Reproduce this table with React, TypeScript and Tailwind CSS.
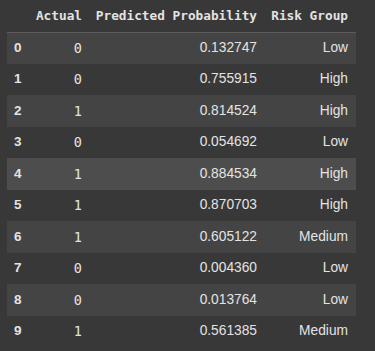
import React from 'react';

interface Row {
  actual: number;
  prob: string;
  risk: string;
}

const rows: Row[] = [
  { actual: 0, prob: '0.132747', risk: 'Low' },
  { actual: 0, prob: '0.755915', risk: 'High' },
  { actual: 1, prob: '0.814524', risk: 'High' },
  { actual: 0, prob: '0.054692', risk: 'Low' },
  { actual: 1, prob: '0.884534', risk: 'High' },
  { actual: 1, prob: '0.870703', risk: 'High' },
  { actual: 1, prob: '0.605122', risk: 'Medium' },
  { actual: 0, prob: '0.004360', risk: 'Low' },
  { actual: 0, prob: '0.013764', risk: 'Low' },
  { actual: 1, prob: '0.561385', risk: 'Medium' },
];

const mono = "font-['DejaVu_Sans_Mono',monospace]";
const sans = "font-['Liberation_Sans',Arial,sans-serif]";

const App: React.FC = () => (
  <div className="h-[351px] w-[375px] overflow-hidden bg-[#383838] pl-[7px]">
    <table className="w-[349px] table-fixed border-collapse text-[#e3e3e3]">
      <colgroup>
        <col className="w-[22px]" />
        <col className="w-[60px]" />
        <col className="w-[175px]" />
        <col className="w-[92px]" />
      </colgroup>
      <thead>
        <tr className={`h-[32px] border-b border-[#5c5c5c] text-[12.75px] font-bold ${mono}`}>
          <th />
          <th className="pr-[7px] text-right">Actual</th>
          <th className="pr-[7px] text-right">Predicted Probability</th>
          <th className="pr-[8px] text-right">Risk Group</th>
        </tr>
      </thead>
      <tbody>
        {rows.map((r, i) => {
          // even rows striped, row 4 sits under the cursor
          const bg = i === 4 ? 'bg-[#4d4d4d]' : i % 2 === 0 ? 'bg-[#444444]' : '';
          const h = i % 2 === 0 ? 'h-[32px]' : 'h-[31px]';
          return (
            <tr key={i} className={`${h} ${bg}`}>
              <td className={`pl-[7px] text-[13.5px] font-bold ${sans}`}>{i}</td>
              <td className={`pr-[7px] text-right text-[13.5px] ${mono}`}>{r.actual}</td>
              <td className={`pr-[7px] text-right text-[13.75px] ${sans}`}>{r.prob}</td>
              <td className={`pr-[8px] text-right text-[13.75px] ${sans}`}>{r.risk}</td>
            </tr>
          );
        })}
      </tbody>
    </table>
  </div>
);

export default App;
